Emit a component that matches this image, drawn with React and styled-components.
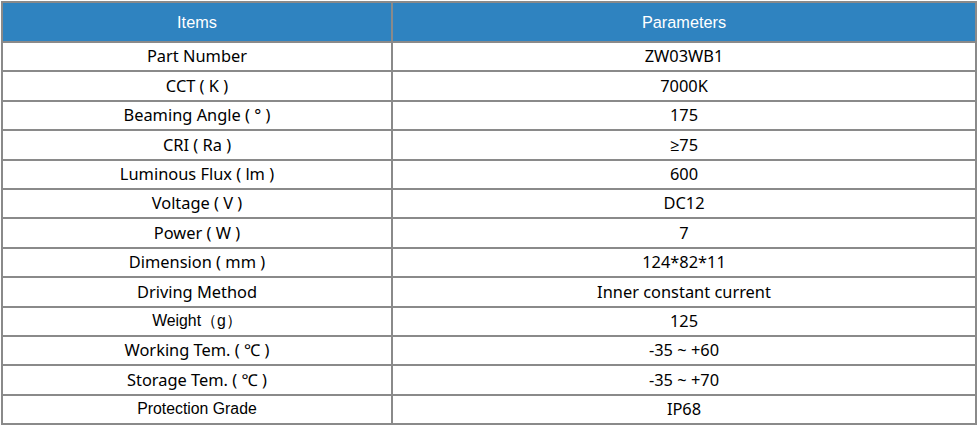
import React from 'react'
import styled, { createGlobalStyle } from 'styled-components'

const GlobalStyle = createGlobalStyle`
    body {
        margin: 0;
        background: #fff;
    }
`

const Wrapper = styled.div`
    padding: 1px 0 0 1px;
`

const SpecTable = styled.table`
    width: 976px;
    border-collapse: collapse;
    border: 2px solid #8a8a8a;
    table-layout: fixed;
`

const HeadCell = styled.th`
    height: 38px;
    padding: 0;
    background-color: #2f83c0;
    color: #fff;
    font-family: "Liberation Sans", Arial, sans-serif;
    font-size: 16.3px;
    font-weight: 400;
    text-align: center;
    border: 2px solid #8a8a8a;
`

const Cell = styled.td`
    height: 27.4px;
    padding: 0;
    color: #000;
    text-align: center;
    border: 2px solid #8a8a8a;
    font-family: ${props => props.arial ? '"Liberation Sans", Arial, sans-serif' : '"Noto Sans", "Open Sans", sans-serif'};
    font-size: ${props => props.arial ? '15.8px' : '16.4px'};
    line-height: 1;
`

const rows = [
    { item: 'Part Number', value: 'ZW03WB1' },
    { item: 'CCT ( K )', value: '7000K' },
    { item: 'Beaming Angle ( ° )', value: '175' },
    { item: 'CRI ( Ra )', value: '≥75' },
    { item: 'Luminous Flux ( lm )', value: '600' },
    { item: 'Voltage ( V )', value: 'DC12' },
    { item: 'Power ( W )', value: '7' },
    { item: 'Dimension ( mm )', value: '124*82*11' },
    { item: 'Driving Method', value: 'Inner constant current' },
    { item: 'Weight（g）', value: '125', arial: true },
    { item: 'Working Tem. ( ℃ )', value: '-35 ~ +60' },
    { item: 'Storage Tem. ( ℃ )', value: '-35 ~ +70' },
    { item: 'Protection Grade', value: 'IP68', arial: true },
]

const App = () => {
    return (
        <Wrapper>
            <GlobalStyle />
            <SpecTable>
                <colgroup>
                    <col style={{ width: '390px' }} />
                    <col />
                </colgroup>
                <thead>
                    <tr>
                        <HeadCell>Items</HeadCell>
                        <HeadCell>Parameters</HeadCell>
                    </tr>
                </thead>
                <tbody>
                    {rows.map(row => (
                        <tr key={row.item}>
                            <Cell arial={row.arial}>{row.item}</Cell>
                            <Cell>{row.value}</Cell>
                        </tr>
                    ))}
                </tbody>
            </SpecTable>
        </Wrapper>
    )
}

export default App
